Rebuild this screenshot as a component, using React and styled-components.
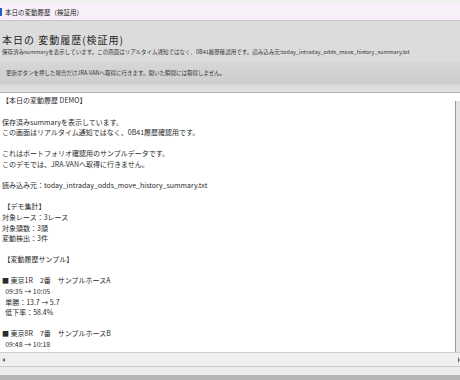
import React from "react";
import styled, { createGlobalStyle } from "styled-components";

const Global = createGlobalStyle`
  html, body { margin: 0; padding: 0; }
  body {
    width: 460px; height: 380px; overflow: hidden;
    background: #dcdcdc;
    font-family: "Noto Sans CJK JP", "Noto Sans", sans-serif;
  }
`;

const Window = styled.div`
  width: 460px;
  height: 380px;
  display: flex;
  flex-direction: column;
  overflow: hidden;
`;

const TitleBar = styled.div`
  height: 17px;
  border-top: 3px solid #efefef;
  border-bottom: 1px solid #c9c4c9;
  background: #f8f0f8;
  display: flex;
  align-items: center;
  gap: 3px;
`;

const TitleIcon = styled.span`
  width: 2px;
  height: 8px;
  background: #1f5fbf;
  margin-top: 1px;
`;

const TitleText = styled.span`
  font-size: 6.5px;
  color: #222;
  margin-top: 1px;
`;

const Header = styled.div`
  padding: 12px 0 0 2px;
  height: 29px;
  display: flex;
  flex-direction: column;
  gap: 1px;
`;

const Heading = styled.h1`
  margin: 0;
  font-size: 10px;
  font-weight: 400;
  letter-spacing: 1px;
  line-height: 14px;
  color: #1e1e1e;
`;

const SubText = styled.p`
  margin: 0;
  font-size: 5.5px;
  line-height: 8px;
  color: #333;
  white-space: nowrap;
`;

const Notice = styled.div`
  height: 22px;
  background: linear-gradient(#d6d6d6, #cecece);
  display: flex;
  align-items: center;
  padding-left: 6px;
  font-size: 5.5px;
  color: #333;
  white-space: nowrap;
`;

const Gap = styled.div`
  height: 8px;
  background: linear-gradient(#d8d8d8, #e4e4e4);
  border-bottom: 1px solid #b4b4b4;
`;

const Body = styled.div`
  flex: 1;
  display: flex;
  min-height: 0;
  background: #fff;
`;

const TextPane = styled.div`
  flex: 1;
  padding: 2.4px 0 0 2px;
  font-size: 7px;
  line-height: 10.6px;
  color: #2a2a2a;
  white-space: pre;
  overflow: hidden;
`;

const VScroll = styled.div`
  width: 4px;
  margin-top: 8px;
  border-left: 1px solid #9a9a9a;
  background: #e4e4e4;
`;

const HScroll = styled.div`
  height: 13px;
  border-top: 1px solid #cfcfcf;
  background: #efefef;
  display: flex;
  align-items: center;
  justify-content: space-between;
  padding: 0 0 0 2px;
`;

const ArrowLeft = styled.span`
  width: 0;
  height: 0;
  border-top: 2px solid transparent;
  border-bottom: 2px solid transparent;
  border-right: 3px solid #666;
`;

const ArrowRight = styled.span`
  width: 0;
  height: 0;
  border-top: 3px solid transparent;
  border-bottom: 3px solid transparent;
  border-left: 2px solid #666;
`;

const Footer = styled.div`
  height: 8px;
  border-top: 1px solid #cacaca;
  background: #ececec;
`;

const Bottom = styled.div`
  flex: 0 0 5px;
  background: #b6b6b6;
`;

const lines = [
  "【本日の変動履歴 DEMO】",
  "",
  "保存済みsummaryを表示しています。",
  "この画面はリアルタイム通知ではなく、0B41履歴確認用です。",
  "",
  "これはポートフォリオ確認用のサンプルデータです。",
  "このデモでは、JRA-VANへ取得に行きません。",
  "",
  "読み込み元：today_intraday_odds_move_history_summary.txt",
  "",
  " 【デモ集計】",
  "対象レース：3レース",
  "対象頭数：3頭",
  "変動検出：3件",
  "",
  " 【変動履歴サンプル】",
  "",
  "■ 東京1R　2番　サンプルホースA",
  "  09:35 → 10:05",
  "  単勝：13.7 → 5.7",
  "  低下率：58.4%",
  "",
  "■ 東京8R　7番　サンプルホースB",
  "  09:48 → 10:18",
];

export default function App() {
  return (
    <Window>
      <Global />
      <TitleBar>
        <TitleIcon />
        <TitleText>本日の変動履歴（検証用）</TitleText>
      </TitleBar>
      <Header>
        <Heading>本日の 変動履歴(検証用)</Heading>
        <SubText>
          保存済みsummaryを表示しています。この画面はリアルタイム通知ではなく、0B41履歴確認用です。読み込み元:today_intraday_odds_move_history_summary.txt
        </SubText>
      </Header>
      <Notice>
        更新ボタンを押した場合だけJRA-VANへ取得に行きます。開いた瞬間には取得しません。
      </Notice>
      <Gap />
      <Body>
        <TextPane>{lines.join("\n")}</TextPane>
        <VScroll />
      </Body>
      <HScroll>
        <ArrowLeft />
        <ArrowRight />
      </HScroll>
      <Footer />
      <Bottom />
    </Window>
  );
}
